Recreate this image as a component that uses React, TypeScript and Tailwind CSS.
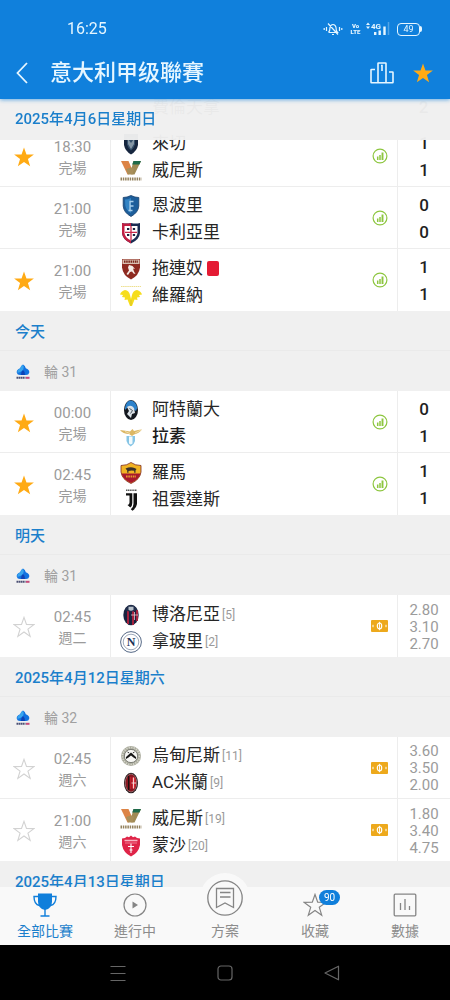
import type { ReactNode } from "react";

type Crest =
  | "lecce" | "venezia" | "empoli" | "cagliari" | "torino" | "verona" | "atalanta"
  | "lazio" | "roma" | "juventus" | "bologna" | "napoli" | "udinese" | "milan" | "monza";

type Team = { name: string; crest: Crest; rank?: number; red?: boolean; strong?: boolean };
type Match = {
  time: string;
  status: string;
  fav: "on" | "off" | "none";
  teams: [Team, Team];
  score?: [number, number];
  odds?: [string, string, string];
};
type Section = { date: string; round: string; matches: Match[] };

const finishedSunday: Match[] = [
  { time: "18:30", status: "完場", fav: "on", teams: [{ name: "來切", crest: "lecce" }, { name: "威尼斯", crest: "venezia" }], score: [1, 1] },
  { time: "21:00", status: "完場", fav: "none", teams: [{ name: "恩波里", crest: "empoli" }, { name: "卡利亞里", crest: "cagliari" }], score: [0, 0] },
  { time: "21:00", status: "完場", fav: "on", teams: [{ name: "拖連奴", crest: "torino", red: true }, { name: "維羅納", crest: "verona" }], score: [1, 1] },
];

const sections: Section[] = [
  {
    date: "今天",
    round: "輪 31",
    matches: [
      { time: "00:00", status: "完場", fav: "on", teams: [{ name: "阿特蘭大", crest: "atalanta" }, { name: "拉素", crest: "lazio", strong: true }], score: [0, 1] },
      { time: "02:45", status: "完場", fav: "on", teams: [{ name: "羅馬", crest: "roma" }, { name: "祖雲達斯", crest: "juventus" }], score: [1, 1] },
    ],
  },
  {
    date: "明天",
    round: "輪 31",
    matches: [
      { time: "02:45", status: "週二", fav: "off", teams: [{ name: "博洛尼亞", crest: "bologna", rank: 5 }, { name: "拿玻里", crest: "napoli", rank: 2 }], odds: ["2.80", "3.10", "2.70"] },
    ],
  },
  {
    date: "2025年4月12日星期六",
    round: "輪 32",
    matches: [
      { time: "02:45", status: "週六", fav: "off", teams: [{ name: "烏甸尼斯", crest: "udinese", rank: 11 }, { name: "AC米蘭", crest: "milan", rank: 9 }], odds: ["3.60", "3.50", "2.00"] },
      { time: "21:00", status: "週六", fav: "off", teams: [{ name: "威尼斯", crest: "venezia", rank: 19 }, { name: "蒙沙", crest: "monza", rank: 20 }], odds: ["1.80", "3.40", "4.75"] },
    ],
  },
];

const crests: Record<Crest, ReactNode> = {
  lecce: (
    <>
      <path d="M4 1h14v11q-1 6-7 9.500Q5 18 4 12z" fill="#16263f" />
      <path d="M7 4.500h8v7q-1 3.500-4 6-3-2.500-4-6z" fill="#35506b" />
      <path d="M8 6l3 4 3-4v5l-3 5-3-5z" fill="#b9c4cc" opacity=".6" />
    </>
  ),
  venezia: (
    <>
      <path d="M1 1h7.500l3 7-3 6.500h-1z" fill="#dc8446" />
      <path d="M13.500 1H21l-6.500 13.500h-3L9.500 10l2-1.500z" fill="#a08a55" />
      <path d="M13.500 1H21l-1.500 3.500h-7.300z" fill="#1f6a4a" />
      <path d="M6 9l5-1.500 3 1-1.500 6H8z" fill="#a98f5a" />
      <path d="M0.500 19h21" stroke="#94825e" strokeWidth="3" strokeDasharray="1.500 .8" />
    </>
  ),
  empoli: (
    <>
      <path d="M11 .5q4 2 7.800 2v8.500q-.5 6.500-7.800 10.500-7.300-4-7.800-10.500V2.500Q7 2.500 11 .5z" fill="#1d5e9b" stroke="#173f6b" strokeWidth=".8" />
      <path d="M5 4.500q3 0 6-1.500v15q-5-3-5.700-7.500z" fill="#3384c4" />
      <path d="M13.500 6.500H10v9M10 11h3.500M8.500 15.500h4" stroke="#a7cdea" strokeWidth="1.300" fill="none" />
    </>
  ),
  cagliari: (
    <>
      <path d="M2 1q4.500 1 9 0 4.500 1 9 0V11q-.5 6.500-9 10.500Q2.500 17.500 2 11z" fill="#1b2c52" />
      <path d="M2 1q4.500 1 9 0v20.500Q2.500 17.500 2 11z" fill="#c21f43" />
      <path d="M4.500 4h13v7q-.5 4.500-6.500 7.500-6-3-6.500-7.500z" fill="#fff" />
      <path d="M11 4v14M5 10.300h12" stroke="#c8284a" strokeWidth="1.300" />
      <path d="M7 7h2.300M12.800 7h2.300M7 13h2.300M12.800 13h2.300" stroke="#1b2440" strokeWidth="2.200" />
    </>
  ),
  torino: (
    <>
      <path d="M2 1h18v8.500q-1 8-9 12-8-4-9-12z" fill="#8e2a20" />
      <path d="M2.500 1.500h17v4.500h-17z" fill="#d9bfb0" />
      <path d="M4 3.700h14" stroke="#7a2418" strokeWidth="2.200" strokeDasharray="1.500 .7" />
      <path d="M9 7l3.500 1 2.500 3-2-.5 1 3 1.500 2.500-2-.5-1.500-2-2 .5L8 17l-1.500-1L9 12.500 8 9.500z" fill="#f6ece6" />
    </>
  ),
  verona: (
    <>
      <path d="M1 1.500h20" stroke="#eddf8d" strokeWidth="1.200" strokeDasharray="1.500 .6" />
      <path d="M0 9.500Q1 6 5 5q4 .5 5 5l1 4 1-4q1-4.500 5-5 4 1 5 4.500l-3 .5 1 2-3 .5.500 2.500-3-.5-2.500 6.500h-2L7.500 14.500l-3 .5.500-2.500-3-.5 1-2z" fill="#f6dd1c" />
      <path d="M11 15v5.500" stroke="#d6c22a" />
    </>
  ),
  atalanta: (
    <>
      <ellipse cx="11" cy="11" rx="7" ry="10" fill="#14181f" />
      <path d="M5 9Q6 1.800 11 1.500q5 .5 6.200 7.500L16 12 9 7 5 11z" fill="#2d82cb" />
      <path d="M7 8q4-3 7 1l1 5-3 1-1 4q-2-2-4-4l2-3z" fill="#dce3e8" />
      <path d="M9.500 9.500l3 2-2 3" stroke="#4c5660" fill="none" />
    </>
  ),
  lazio: (
    <>
      <path d="M0 4q6 .5 10 1.500L12.500 3l1.500 2q4-1.500 8-1.500-3 4-8 5l-2 1.500-3-2Q3 8 0 4z" fill="#dcb765" />
      <path d="M5 5.500l5 2M21 4l-6 3" stroke="#f5e6bd" strokeWidth=".8" />
      <path d="M6.500 10h8.500v5q-1 4-4.300 5.500Q7.500 19 6.500 15z" fill="#86c5e6" />
      <path d="M9 10.500h3.500v7l-1.700 1-1.800-1z" fill="#f2fafd" />
    </>
  ),
  roma: (
    <>
      <path d="M1 3.500Q7 3.500 11 .5q4 3 10 3V10q-1 7.500-10 11.500Q2 17.500 1 10z" fill="#f0b323" stroke="#7d2a1d" strokeWidth=".8" />
      <path d="M1.500 11.500h19q-1.500 6-9.500 9.500Q3 17.500 1.500 11.500z" fill="#a8192d" />
      <path d="M5.500 6.500q5-2 9-.5l2 1-1 1.500v2.200h-1.300V8.800l-2.700-.3-3 .5v1.700H7.200V8.500z" fill="#39302a" />
      <path d="M6 14.500h10" stroke="#e89a2c" strokeWidth="2" strokeDasharray="1.600 .7" />
    </>
  ),
  juventus: (
    <>
      <path d="M6 1.200h11" stroke="#555" strokeWidth="1.600" strokeDasharray="1.300 .5" />
      <path d="M6 4.300h6.300V14q0 3-2 4.500L7.500 16q2-.5 2-2.500V6.500H6z" fill="#111" />
      <path d="M13.500 4.300H17V15q-.5 4-4.500 6.700l-1.700-1.500q2.700-2.200 2.700-5.200z" fill="#111" />
    </>
  ),
  bologna: (
    <>
      <ellipse cx="11" cy="11" rx="7.700" ry="10.300" fill="#18233f" />
      <path d="M8 4v16M13 4v17M17 6v11" stroke="#a3203c" strokeWidth="2" />
      <path d="M5 6q2-4.800 6-5.100 4 .3 6 5.100-6 3-12 0z" fill="#22304d" />
      <path d="M8.500 2.800h5v3q-2.500 2-5 0z" fill="#b9c2cb" />
      <path d="M11 11h7M14.500 8v8" stroke="#e7c4cc" strokeWidth=".8" />
    </>
  ),
  napoli: (
    <>
      <circle cx="11" cy="11" r="10.400" fill="#fff" stroke="#2c4468" strokeWidth=".8" />
      <circle cx="11" cy="11" r="7.800" fill="#fff" stroke="#8493a8" strokeWidth=".8" />
      <text x="11" y="15.200" textAnchor="middle" fontSize="12" fontWeight="700" fontFamily="Liberation Serif, serif" fill="#1a3157">N</text>
    </>
  ),
  udinese: (
    <>
      <circle cx="11" cy="11" r="10" fill="#a9aa9c" />
      <circle cx="11" cy="11" r="8.500" fill="none" stroke="#d6d6cc" strokeWidth="1.700" strokeDasharray="1.200 1.300" />
      <circle cx="11" cy="11" r="6.600" fill="#f7f7f4" stroke="#5d5e58" strokeWidth=".7" />
      <path d="M6 12l5-4.500 5 4.500v2l-2.500-1.500-2.500-2-2.500 2L6 14z" fill="#161616" />
      <path d="M7.500 7l1.700 1M14.500 7l-1.700 1" stroke="#333" />
    </>
  ),
  milan: (
    <>
      <ellipse cx="11" cy="11" rx="7" ry="10.300" fill="#231416" />
      <ellipse cx="11" cy="11" rx="5.800" ry="9" fill="#8a1822" stroke="#b79a9a" strokeWidth=".6" />
      <path d="M8.700 4v14" stroke="#171010" strokeWidth="1.300" />
      <path d="M11.200 5v12h-1V5z" fill="#cc1f2d" />
      <path d="M11.800 5.500h3.500q1 5.500 0 11h-3.500z" fill="#d12a36" />
      <path d="M13.500 5.500v11M11.500 11h4.700" stroke="#f7e2e2" strokeWidth=".9" />
    </>
  ),
  monza: (
    <>
      <path d="M2 3.500q3.500 0 5-2l2 .8 2-1.800 2 1.800 2-.8q1.500 2 5 2v6.500q-1.500 8-9 11.500Q3.500 18 2 10z" fill="#df2448" />
      <path d="M4.500 5.500h13" stroke="#f8b4c2" strokeWidth="1.500" />
      <path d="M11 8.500V18M8 11.500h6M9.500 15h3" stroke="#fff" strokeWidth="1.100" />
      <path d="M5 8h12" stroke="#f7a5b6" strokeWidth=".7" />
    </>
  ),
};

function TeamCrest({ crest }: { crest: Crest }) {
  return (
    <svg viewBox="0 0 22 22" className="size-[22px] shrink-0" aria-hidden="true">
      {crests[crest]}
    </svg>
  );
}

const starPoints = "12,1.500 14.700,9.200 22.800,9.400 16.300,14.300 18.700,22.200 12,17.500 5.300,22.200 7.700,14.300 1.200,9.400 9.300,9.200";

function Star({ className, filled }: { className: string; filled?: boolean }) {
  return (
    <svg viewBox="0 0 24 24" className={className} fill={filled ? "currentColor" : "none"} stroke={filled ? "none" : "currentColor"} strokeWidth="1.200" aria-hidden="true">
      <polygon points={starPoints} />
    </svg>
  );
}

function StatsIcon() {
  return (
    <svg viewBox="0 0 16 16" className="size-4" fill="none" stroke="#8dc63f" aria-hidden="true">
      <circle cx="8" cy="8" r="6.900" strokeWidth="1.200" />
      <path d="M5.700 12V8.500M8 12V7" strokeWidth="1.500" />
      <path d="M10.500 12V4.500" strokeWidth="1.900" />
    </svg>
  );
}

function OddsIcon() {
  return (
    <svg viewBox="0 0 17 12" className="h-3 w-[17px]" aria-hidden="true">
      <rect width="17" height="12" rx="1" fill="#eda91c" />
      <ellipse cx="8.500" cy="6" rx="2.200" ry="3" fill="none" stroke="#fff" strokeWidth="1.200" />
      <path d="M8.500 1.800v8.400" stroke="#fff" strokeWidth=".9" />
      <path d="M2 4.800v2.400M15 4.800v2.400" stroke="#fff" strokeWidth="1" />
    </svg>
  );
}

function LeagueIcon() {
  return (
    <svg viewBox="0 0 14 16" className="h-4 w-3.5" aria-hidden="true">
      <path d="M7 .5q2.300 1.300 2.800 3.800Q13.500 5.500 13.300 8.500q-.5 2.500-3.300 2.500H4Q1.200 11 .7 8.500.5 5.500 4.200 4.300 4.700 1.800 7 .5z" fill="#1272e0" />
      <path d="M7 .8q1.500 2.500.3 4.700T1.500 9Q.8 5.800 4.200 4.500 4.700 2 7 .8z" fill="#38a5ee" />
      <path d="M7 6q2.500 2 2 5H5q-.5-3 2-5z" fill="#0f43b5" />
      <path d="M.5 13.800h9" stroke="#4b4f73" strokeWidth="2" strokeDasharray="1.700 .4" />
      <path d="M10 13.800h3.500" stroke="#c54a7a" strokeWidth="2" />
    </svg>
  );
}

function DateHeading({ children }: { children: ReactNode }) {
  return <h2 className="flex h-10 items-center border-b border-[#eaeaea] bg-[#f0f0f0] px-[15px] pt-1 text-[15px] font-medium text-[#1b7fcb]">{children}</h2>;
}

function TeamLine({ team }: { team: Team }) {
  return (
    <div className="flex h-[27px] items-center">
      <TeamCrest crest={team.crest} />
      <span className={team.strong ? "ml-2.5 text-[17px] font-medium text-[#1c1c1c]" : "ml-2.5 text-[17px] text-[#262626]"}>{team.name}</span>
      {team.rank !== undefined && <span className="ml-0.5 text-xs text-[#9a9a9a]">[{team.rank}]</span>}
      {team.red && <span className="ml-1 h-[15px] w-3 rounded-xs bg-[#e41b34]" />}
    </div>
  );
}

function MatchRow({ match }: { match: Match }) {
  return (
    <li className="flex h-[62px] border-b border-[#ededed] bg-white last:border-b-0">
      <div className="flex w-12 shrink-0 items-center justify-center pt-0.5">
        {match.fav !== "none" && (
          <button type="button" aria-label={match.teams[0].name} className={match.fav === "on" ? "text-[#ffaa14]" : "text-[#d2d2d2]"}>
            <Star className="size-[22px]" filled={match.fav === "on"} />
          </button>
        )}
      </div>
      <div className="flex w-[62px] shrink-0 flex-col items-center justify-center pt-1 pr-[13px] text-[#9b9b9b]">
        <span className="text-[15px] leading-[21px]">{match.time}</span>
        <span className="text-sm leading-[21px]">{match.status}</span>
      </div>
      <div className="flex min-w-0 flex-1 flex-col justify-center border-l border-[#ededed] pt-1 pl-[9px]">
        <TeamLine team={match.teams[0]} />
        <TeamLine team={match.teams[1]} />
      </div>
      <div className="flex w-[35px] shrink-0 items-center justify-center">{match.score ? <StatsIcon /> : <OddsIcon />}</div>
      <div className="flex w-[53px] shrink-0 flex-col items-center justify-center border-l border-[#ededed] pt-0.5">
        {match.score?.map((goals, i) => (
          <span key={i} className="text-[17px] leading-[27px] font-medium text-[#1f1f1f]">{goals}</span>
        ))}
        {match.odds?.map((odd) => (
          <span key={odd} className="text-[15px] leading-[17px] text-[#9b9b9b]">{odd}</span>
        ))}
      </div>
    </li>
  );
}

function StatusBar() {
  return (
    <div className="flex h-[26px] items-center pr-7 pl-[67px]">
      <span className="flex-1 text-base leading-none">16:25</span>
      <svg viewBox="0 0 20 14" className="mr-2 h-3.5 w-5" fill="none" stroke="currentColor" strokeWidth="1.200" aria-hidden="true">
        <path d="M6 10.500h8.500q-1.500-1.500-1.500-5Q12.500 2.500 10 2.500T7 5.500q0 3.500-1.500 5M9 12.500h2M5 1.500l10 11M3.500 5v4M16.500 5v4M1.200 6v2M18.800 6v2" />
      </svg>
      <span className="mr-1.5 flex w-[9px] flex-col items-center text-[6px] leading-[6px] font-black">
        <span>Vo</span>
        <span>LTE</span>
      </span>
      <svg viewBox="0 0 24 14" className="mr-[7px] h-3.5 w-6" aria-hidden="true">
        <path d="M0 3l2-2.500L4 3zM0 4.500h4L2 7z" fill="currentColor" />
        <text x="5" y="6.800" fontSize="8" fontWeight="700" fill="currentColor">4G</text>
        <path d="M9.200 10V13M13.700 8.500V13M18.500 4.500V13" stroke="currentColor" strokeWidth="2.400" />
        <path d="M22.500 0v13" stroke="currentColor" strokeWidth="1.500" opacity=".3" />
      </svg>
      <span className="flex h-[13px] w-[23px] items-center justify-center rounded-[4px] border border-current text-[9px] leading-none">49</span>
      <span className="h-1.5 w-0.5 rounded-r bg-current" />
    </div>
  );
}

const tabIcon = "size-6 text-[#858585]";

function TabBar() {
  const tab = "flex flex-1 flex-col items-center pt-1.5 text-sm leading-none text-[#8c8c8c]";
  return (
    <nav className="relative z-10 flex h-[58px] shrink-0 bg-[#f9f9f9]">
      <button type="button" className={tab}>
        <svg viewBox="0 0 24 24" className="size-6 text-[#107fdb]" fill="none" stroke="currentColor" aria-hidden="true">
          <path d="M5 .5h14v8q0 7-7 8.500-7-1.500-7-8.500z" fill="currentColor" stroke="none" />
          <path d="M5 3.500H1q0 8 5.500 9M19 3.500h4q0 8-5.500 9M12 16v6.500M7.500 23h9" strokeWidth="1.400" />
        </svg>
        <span className="mt-[7px] text-[#1b7fcb]">全部比賽</span>
      </button>
      <button type="button" className={tab}>
        <svg viewBox="0 0 24 24" className={tabIcon} fill="none" stroke="currentColor" aria-hidden="true">
          <circle cx="12" cy="12" r="11" strokeWidth="1.200" />
          <path d="M9.500 8.500l5.500 3.500-5.500 3.500z" fill="currentColor" stroke="none" />
        </svg>
        <span className="mt-[7px]">進行中</span>
      </button>
      <button type="button" className="relative flex flex-1 flex-col items-center pt-[37px] text-sm leading-none text-[#8c8c8c]">
        <span className="absolute -top-3.5 flex size-[50px] items-center justify-center rounded-full bg-[#f9f9f9]">
          <svg viewBox="0 0 36 36" className="size-9 text-[#858585]" fill="none" stroke="currentColor" strokeWidth="1.300" aria-hidden="true">
            <circle cx="18" cy="18" r="17.200" />
            <path d="M9.500 8.500h17v19L18 23l-8.500 4.500zM13 12.500h10.500M13 17h10.500" />
          </svg>
        </span>
        <span>方案</span>
      </button>
      <button type="button" className={tab}>
        <span className="relative">
          <Star className={tabIcon} />
          <span className="absolute -top-[3px] left-4 flex h-[15px] w-[21px] items-center justify-center rounded-full bg-[#107fdb] text-[10px] text-white">90</span>
        </span>
        <span className="mt-[7px]">收藏</span>
      </button>
      <button type="button" className={tab}>
        <svg viewBox="0 0 24 24" className={tabIcon} fill="none" stroke="currentColor" strokeWidth="1.300" aria-hidden="true">
          <rect x="1.200" y="1.200" width="21.600" height="21.600" rx="1" />
          <path d="M7.500 10v7M12 6v11M16.500 13v4" />
        </svg>
        <span className="mt-[7px]">數據</span>
      </button>
    </nav>
  );
}

export default function App() {
  return (
    <div className="flex h-screen flex-col overflow-hidden bg-[#f0f0f0] font-[Roboto,'Noto_Sans_CJK_TC',sans-serif]">
      <header className="relative z-20 shrink-0 bg-[#1080dc] pt-4 text-[#e6f6ff] shadow-[0_1px_4px_#1080dc99]">
        <StatusBar />
        <div className="flex h-[57px] items-center px-4 pt-1">
          <button type="button" aria-label="返回">
            <svg viewBox="0 0 12 22" className="h-[22px] w-3" fill="none" stroke="currentColor" strokeWidth="1.800" aria-hidden="true">
              <path d="M11 1L1.500 11 11 21" />
            </svg>
          </button>
          <h1 className="ml-[22px] flex-1 text-[22px] leading-none font-medium">意大利甲级聯賽</h1>
          <button type="button" aria-label="排名" className="mr-[18px]">
            <svg viewBox="0 0 24 22" className="h-[22px] w-6" fill="none" stroke="currentColor" strokeWidth="1.600" aria-hidden="true">
              <path d="M5 7.500H1.500Q1 7.500 1 8v12.200q0 .5.500.5h21q.5 0 .5-.5v-9.700q0-.5-.5-.5H19M8 20.700V1.500Q8 1 8.500 1h7q.5 0 .5.500v19.200M11 3.500h1V9" />
            </svg>
          </button>
          <button type="button" aria-label="收藏" className="text-[#ffaa14]">
            <Star className="size-[22px]" filled />
          </button>
        </div>
      </header>

      <main className="min-h-0 flex-1 overflow-hidden">
        <div className="sticky top-0 z-10 -mb-[41px] flex h-[41px] items-center bg-[#f0f0f0]/97 px-[15px] text-[15px] font-medium text-[#1b7fcb]">2025年4月6日星期日</div>
        <div className="flex h-[26px] items-start border-b border-[#ededed] bg-white text-[17px] leading-[17px] text-[#262626]">
          <span className="flex-1 pl-[152px]">費倫天拿</span>
          <span className="w-[53px] text-center font-medium">2</span>
        </div>
        <ul>
          {finishedSunday.map((match) => (
            <MatchRow key={match.teams[0].name} match={match} />
          ))}
        </ul>
        {sections.map((section) => (
          <section key={section.date}>
            <DateHeading>{section.date}</DateHeading>
            <h3 className="flex h-10 items-center pt-0.5 pl-4 text-sm text-[#a0a0a0]">
              <LeagueIcon />
              <span className="ml-3.5">{section.round}</span>
            </h3>
            <ul>
              {section.matches.map((match) => (
                <MatchRow key={match.teams[0].name} match={match} />
              ))}
            </ul>
          </section>
        ))}
        <DateHeading>2025年4月13日星期日</DateHeading>
      </main>

      <TabBar />

      <footer className="grid h-[55px] shrink-0 grid-cols-3 place-items-center bg-black px-16 text-[#666]">
        <button type="button" aria-label="選單">
          <svg viewBox="0 0 16 16" className="size-4" fill="none" stroke="currentColor" aria-hidden="true">
            <path d="M.5 1.500h15M.5 8.500h15M.5 15.500h15" />
          </svg>
        </button>
        <button type="button" aria-label="主頁">
          <svg viewBox="0 0 16 16" className="size-4" fill="none" stroke="currentColor" strokeWidth="1.200" aria-hidden="true">
            <rect x="1" y="1" width="14" height="14" rx="3" />
          </svg>
        </button>
        <button type="button" aria-label="上一頁">
          <svg viewBox="0 0 16 16" className="size-4" fill="none" stroke="currentColor" strokeWidth="1.200" strokeLinejoin="round" aria-hidden="true">
            <path d="M14.500 1.200v13.600L1 8z" />
          </svg>
        </button>
      </footer>
    </div>
  );
}
